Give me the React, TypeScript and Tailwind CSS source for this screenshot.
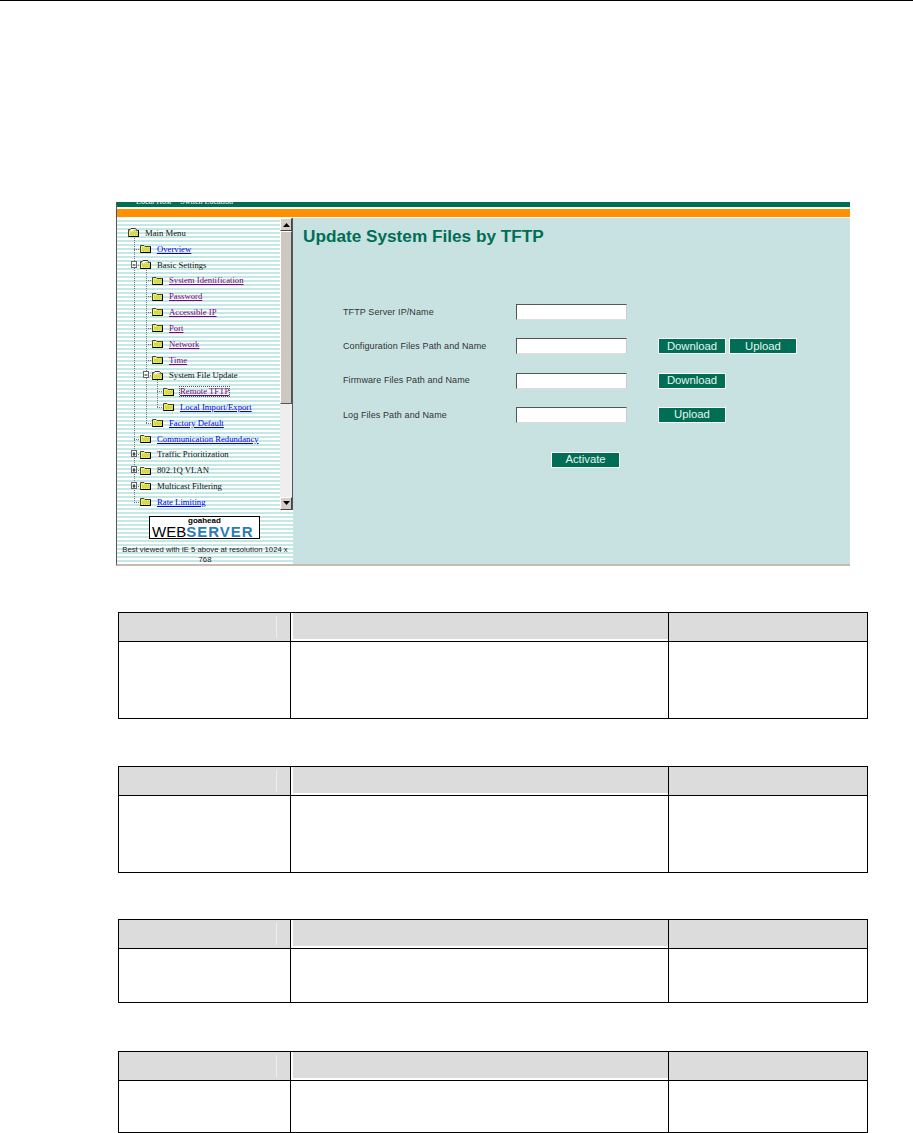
const treeRows = [
  { level: 0, label: "Main Menu", open: true },
  { level: 1, label: "Overview", color: "link" },
  { level: 1, label: "Basic Settings", open: true },
  { level: 2, label: "System Identification", color: "visited" },
  { level: 2, label: "Password", color: "visited" },
  { level: 2, label: "Accessible IP", color: "visited" },
  { level: 2, label: "Port", color: "visited" },
  { level: 2, label: "Network", color: "visited" },
  { level: 2, label: "Time", color: "visited" },
  { level: 2, label: "System File Update", open: true },
  { level: 3, label: "Remote TFTP", color: "visited", dotted: true },
  { level: 3, label: "Local Import/Export", color: "link" },
  { level: 2, label: "Factory Default", color: "link" },
  { level: 1, label: "Communication Redundancy", color: "link" },
  { level: 1, label: "Traffic Prioritization" },
  { level: 1, label: "802.1Q VLAN" },
  { level: 1, label: "Multicast Filtering" },
  { level: 1, label: "Rate Limiting", color: "link" },
];

const indent: Record<number, string> = {
  0: "pl-[11px]",
  1: "pl-[23px]",
  2: "pl-[35px]",
  3: "pl-[46px]",
};

function Folder({ open }: { open?: boolean }) {
  return (
    <svg width="11" height="9" viewBox="0 0 11 9" className="shrink-0">
      <path d="M0.5 8.5V1.5H4L5 2.5H10.5V8.5Z" fill="#f4f45c" stroke="#444" />
      {open && <path d="M0.5 3L3 0.5H7.5L9 2.5" fill="#fff" stroke="#333" />}
      <path d="M2 4H10M3 5H10M2 6H10M3 7H10" stroke="#bdbd3c" strokeDasharray="1 1" />
      <path d="M10.5 2.5V8.5H0.5" fill="none" stroke="#000" />
    </svg>
  );
}

function Expander({ x, y, plus }: { x: number; y: number; plus?: boolean }) {
  return (
    <g>
      <rect x={x + 0.5} y={y - 3.5} width="5" height="6" fill="#fff" stroke="#666" />
      <path d={`M${x + 1.5} ${y}H${x + 4.5}`} stroke="#111" />
      {plus && <path d={`M${x + 3} ${y - 2}V${y + 2}`} stroke="#111" />}
    </g>
  );
}

// connector lines between the folders, row centres are 15.82px apart
function TreeLines() {
  const cy = (i: number) => Math.round(15 + 15.82 * i);
  const dash = { stroke: "#777", strokeDasharray: "1 1", fill: "none" };
  return (
    <svg width="164" height="292" className="absolute left-0 top-0">
      <path d={`M17.5 ${cy(0) + 5}V${cy(17)}`} {...dash} />
      <path d={`M29.5 ${cy(2) + 5}V${cy(12)}`} {...dash} />
      <path d={`M40.5 ${cy(9) + 5}V${cy(11)}`} {...dash} />
      {[1, 2, 13, 14, 15, 16, 17].map((i) => (
        <path key={i} d={`M17 ${cy(i) + 0.5}H23`} {...dash} />
      ))}
      {[3, 4, 5, 6, 7, 8, 9, 12].map((i) => (
        <path key={i} d={`M29 ${cy(i) + 0.5}H35`} {...dash} />
      ))}
      {[10, 11].map((i) => (
        <path key={i} d={`M40 ${cy(i) + 0.5}H46`} {...dash} />
      ))}
      <Expander x={14} y={cy(2)} />
      <Expander x={26} y={cy(9)} />
      <Expander x={14} y={cy(14)} plus />
      <Expander x={14} y={cy(15)} plus />
      <Expander x={14} y={cy(16)} plus />
    </svg>
  );
}

function TreeRow({ row }: { row: (typeof treeRows)[number] }) {
  const tone =
    row.color === "link"
      ? "text-[#0000ee] underline"
      : row.color === "visited"
        ? "text-[#800080] underline"
        : "text-[#111]";
  return (
    <div className={`flex h-[15.82px] items-center gap-[6px] ${indent[row.level]}`}>
      <Folder open={row.open} />
      <div className="pt-[1px]">
        <span
          className={`block whitespace-nowrap text-[8.7px] leading-none ${tone} ${
            row.dotted ? "outline-1 outline-dotted outline-[#555]" : ""
          }`}
        >
          {row.label}
        </span>
      </div>
    </div>
  );
}

function ScrollButton({ up }: { up?: boolean }) {
  return (
    <div className="flex h-[13px] items-center justify-center border border-t-white border-l-white border-r-[#444] border-b-[#444] bg-[#d4d0c8]">
      <svg width="7" height="4" viewBox="0 0 7 4">
        <path d={up ? "M3.5 0L7 4H0Z" : "M0 0H7L3.5 4Z"} fill="#000" />
      </svg>
    </div>
  );
}

function Scrollbar() {
  return (
    <div className="flex w-[12px] shrink-0 flex-col bg-[radial-gradient(#999_0.6px,#eee_0.6px)] bg-[length:2px_2px]">
      <ScrollButton up />
      <div className="h-[173px] border border-t-white border-l-white border-r-[#555] border-b-[#555] bg-[#cdc9c0]" />
      <div className="flex-1" />
      <ScrollButton />
    </div>
  );
}

function Sidebar() {
  return (
    <div className="flex w-[176px] shrink-0 flex-col bg-[repeating-linear-gradient(180deg,#ffffff_0px,#ffffff_2px,#c4e8e5_2px,#c4e8e5_4px)]">
      <div className="flex h-[292px] border-r border-[#555]">
        <div className="relative flex-1 overflow-hidden pt-[7px]">
          <TreeLines />
          <div className="relative flex flex-col">
            {treeRows.map((row) => (
              <TreeRow key={row.label} row={row} />
            ))}
          </div>
        </div>
        <Scrollbar />
      </div>
      <div className="flex justify-center pr-[1px] pt-[6px]">
        <div className="flex h-[23px] w-[111px] flex-col border border-black bg-white font-['Liberation_Sans',sans-serif]">
          <span className="h-[8px] pl-[38px] text-[8px] font-bold leading-[8px] text-black">goahead</span>
          <div className="flex h-[13px] items-center pl-[2px] text-[15px] leading-[13px]">
            <span className="text-black">WEB</span>
            <span className="font-bold tracking-[1px] text-[#2a7cb5]">SERVER</span>
          </div>
        </div>
      </div>
      <p className="mt-[6px] px-[4px] text-center font-['Liberation_Sans',sans-serif] text-[7.7px] leading-[10px] text-[#222]">
        Best viewed with IE 5 above at resolution 1024 x 768
      </p>
    </div>
  );
}

function Button({ label, className = "" }: { label: string; className?: string }) {
  return (
    <div
      className={`flex h-[16px] items-center justify-center border border-white bg-[#006e55] text-[11.3px] leading-none text-[#e8f4f0] ${className}`}
    >
      {label}
    </div>
  );
}

const formRows = [
  { label: "TFTP Server IP/Name", buttons: [] as string[] },
  { label: "Configuration Files Path and Name", buttons: ["Download", "Upload"] },
  { label: "Firmware Files Path and Name", buttons: ["Download"] },
  { label: "Log Files Path and Name", buttons: ["Upload"] },
];

function MainPanel() {
  return (
    <div className="flex-1 bg-[#c8e2e2] pl-[10px] pt-[8px] font-['Liberation_Sans',sans-serif]">
      <h1 className="text-[17.2px] font-bold leading-[21px] text-[#006e55]">Update System Files by TFTP</h1>
      <div className="ml-[40px] mt-[57px] flex flex-col gap-[18.3px]">
        {formRows.map((row) => (
          <div key={row.label} className="flex h-[16px] items-center">
            <span className="w-[173px] shrink-0 pt-[1px] text-[9px] tracking-[0.1px] text-[#333]">{row.label}</span>
            <div className="h-[16px] w-[111px] shrink-0 border border-t-[#555] border-l-[#555] border-r-[#ccc] border-b-[#ddd] bg-white" />
            <div className="ml-[31px] flex gap-[3px]">
              {row.buttons.map((b) => (
                <Button key={b} label={b} className="w-[68px]" />
              ))}
            </div>
          </div>
        ))}
      </div>
      <Button label="Activate" className="ml-[248px] mt-[29px] w-[69px]" />
    </div>
  );
}

function Screenshot() {
  return (
    <div className="ml-[116px] flex h-[364px] w-[734px] flex-col border-b-2 border-l border-[#c4bcb4] border-l-[#555] bg-white">
      <div className="h-[5px] overflow-hidden bg-[#006e55]">
        <div className="-mt-[5px] flex gap-[9px] whitespace-nowrap pl-[19px] font-['Liberation_Serif',serif] text-[8px] leading-[10px] text-white">
          <span>Local Host</span>
          <span>Switch Location</span>
        </div>
      </div>
      <div className="mt-[2px] h-[8px] bg-[#ff9000]" />
      <div className="mt-px flex min-h-0 flex-1 font-['Liberation_Serif',serif]">
        <Sidebar />
        <MainPanel />
      </div>
    </div>
  );
}

function BlankTable({ bodyHeight, className = "" }: { bodyHeight: number; className?: string }) {
  return (
    <div
      className={`ml-[118px] grid w-[750px] grid-cols-[172px_378px_1fr] border border-black ${className}`}
    >
      <div className="flex h-[29px] justify-end border-b border-r border-black bg-[#dcdcdc] pr-[13px]">
        <div className="my-[3px] w-px bg-[#eeeeee]" />
      </div>
      <div className="h-[29px] border-b border-r border-black pb-[2px] pl-[2px]">
        <div className="h-full bg-[#dcdcdc]" />
      </div>
      <div className="h-[29px] border-b border-black bg-[#dcdcdc]" />
      <div className="border-r border-black" style={{ height: bodyHeight }} />
      <div className="border-r border-black" />
      <div />
    </div>
  );
}

export default function App() {
  return (
    <div className="h-[1133px] w-[913px] overflow-hidden bg-white">
      <div className="h-px bg-black" />
      <div className="pt-[201px]">
        <Screenshot />
      </div>
      <BlankTable bodyHeight={76} className="mt-[46px]" />
      <BlankTable bodyHeight={76} className="mt-[47px]" />
      <BlankTable bodyHeight={53} className="mt-[46px]" />
      <BlankTable bodyHeight={51} className="mt-[48px]" />
    </div>
  );
}
